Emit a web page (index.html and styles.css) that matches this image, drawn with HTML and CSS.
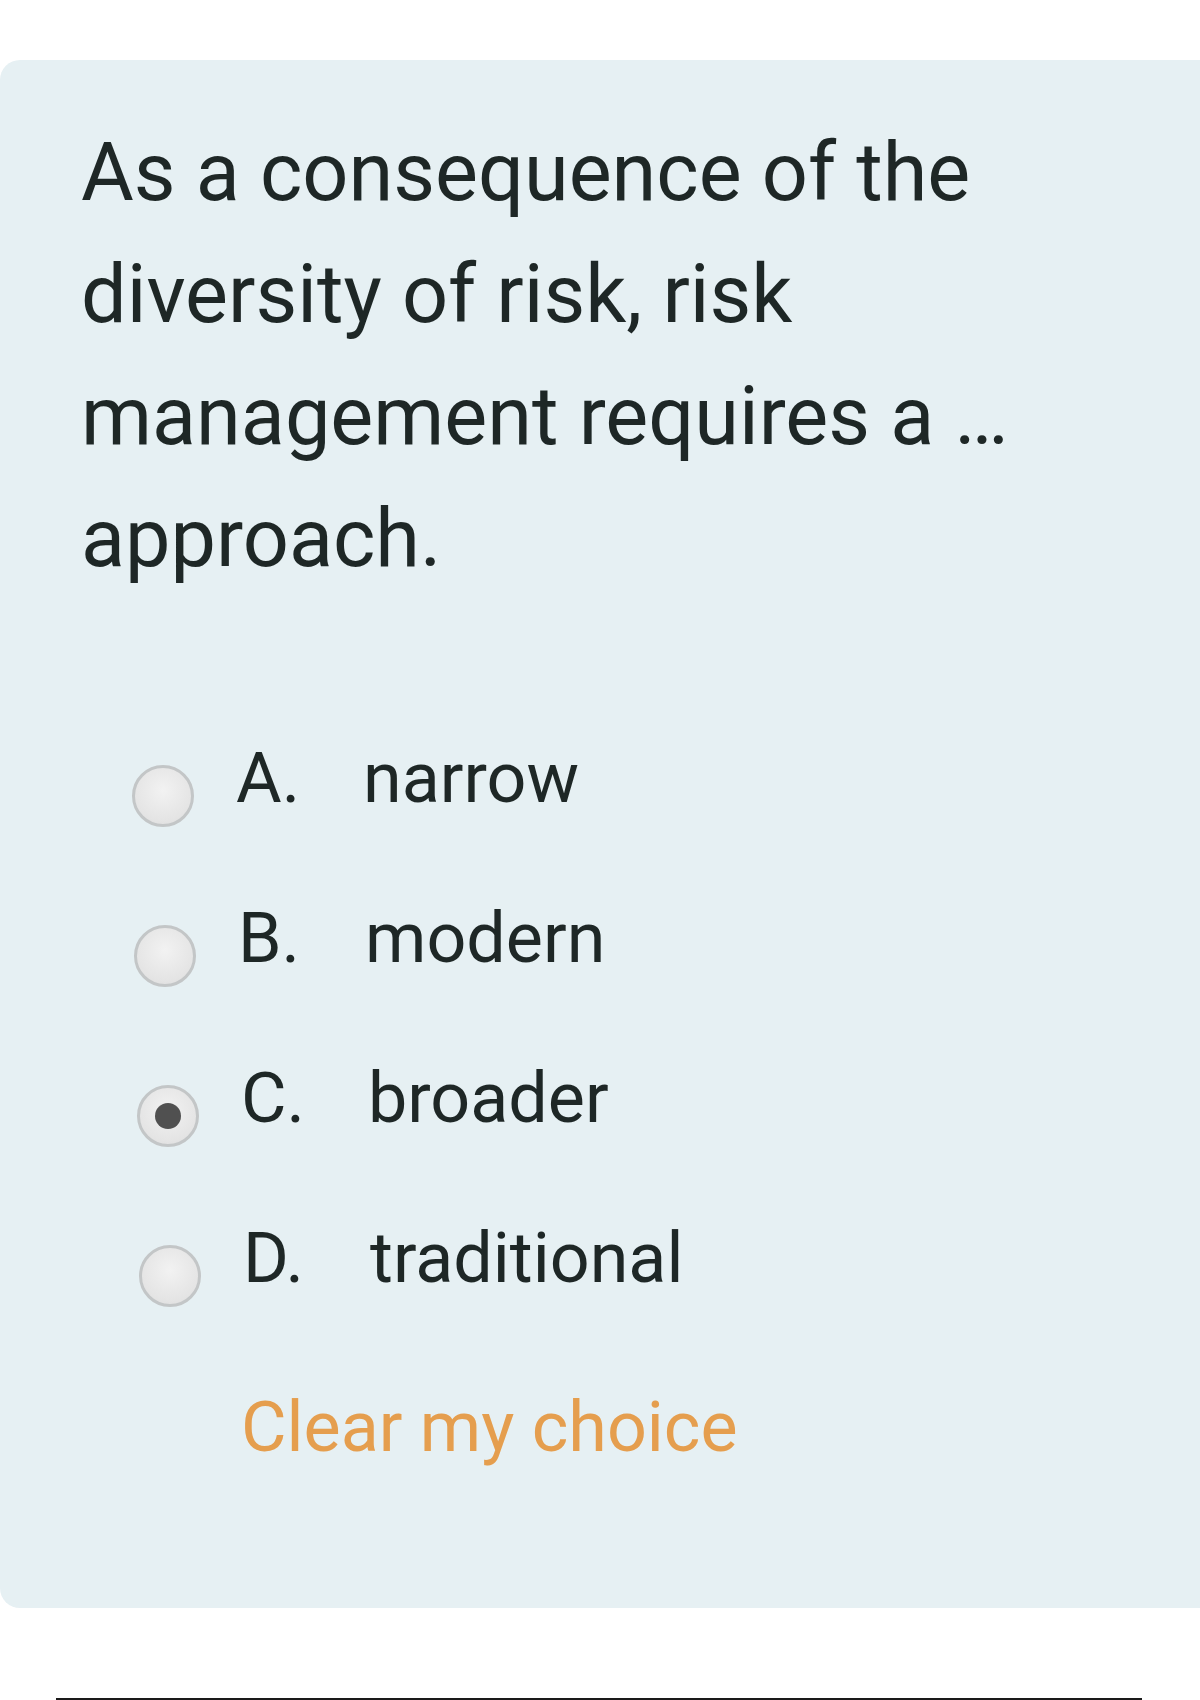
FILE: index.html
```html
<!DOCTYPE html>
<html lang="en">
<head>
<meta charset="utf-8">
<title>Question</title>
<link rel="stylesheet" href="styles.css">
</head>
<body>
<div class="page">
  <div class="panel">
    <p class="question">As a consequence of the diversity of risk, risk management requires a … approach.</p>
    <div class="options">
      <label class="option opt-a"><span class="radio"></span><span class="letter">A.</span><span class="text">narrow</span></label>
      <label class="option opt-b"><span class="radio"></span><span class="letter">B.</span><span class="text">modern</span></label>
      <label class="option opt-c"><span class="radio checked"></span><span class="letter">C.</span><span class="text">broader</span></label>
      <label class="option opt-d"><span class="radio"></span><span class="letter">D.</span><span class="text">traditional</span></label>
    </div>
    <a class="clear">Clear my choice</a>
  </div>
  <div class="rule"></div>
</div>
</body>
</html>
```
FILE: styles.css
```css
html, body {
  margin: 0;
  padding: 0;
  background: #ffffff;
}
.page {
  width: 1200px;
  height: 1700px;
  display: flex;
  flex-direction: column;
  overflow: hidden;
}
.panel {
  margin-top: 60px;
  height: 1552px;
  box-sizing: border-box;
  background: #e6f0f3;
  border-radius: 20px 0 0 20px;
  padding: 52px 0 0 81px;
  display: flex;
  flex-direction: column;
  font-family: Roboto, "Noto Sans", sans-serif;
  color: #1e2726;
}
.question {
  margin: 0;
  width: 1040px;
  font-size: 81px;
  line-height: 122px;
}
.options {
  margin-top: 98px;
  display: flex;
  flex-direction: column;
}
.option {
  height: 160px;
  display: flex;
  align-items: flex-start;
  font-size: 70px;
  line-height: 160px;
}
.opt-b { padding-left: 2px; }
.opt-c { padding-left: 5px; }
.opt-d { padding-left: 7px; }
.radio {
  width: 62px;
  height: 62px;
  box-sizing: border-box;
  margin: 67px 42px 0 51px;
  border-radius: 50%;
  border: 3px solid #c3c6c7;
  background: radial-gradient(circle at 50% 40%, #f2f2f2 0%, #e4e4e4 70%, #d9d9d9 100%);
  display: flex;
  align-items: center;
  justify-content: center;
  flex-shrink: 0;
}
.radio.checked::after {
  content: "";
  width: 26px;
  height: 26px;
  border-radius: 50%;
  background: #505050;
}
.letter {
  width: 127px;
}
.clear {
  margin-top: 47px;
  margin-left: 160px;
  font-size: 70px;
  line-height: 84px;
  color: #e59e4e;
}
.rule {
  margin: 90px 0 0 56px;
  width: 1086px;
  height: 2px;
  background: #1a1a1a;
}
```
